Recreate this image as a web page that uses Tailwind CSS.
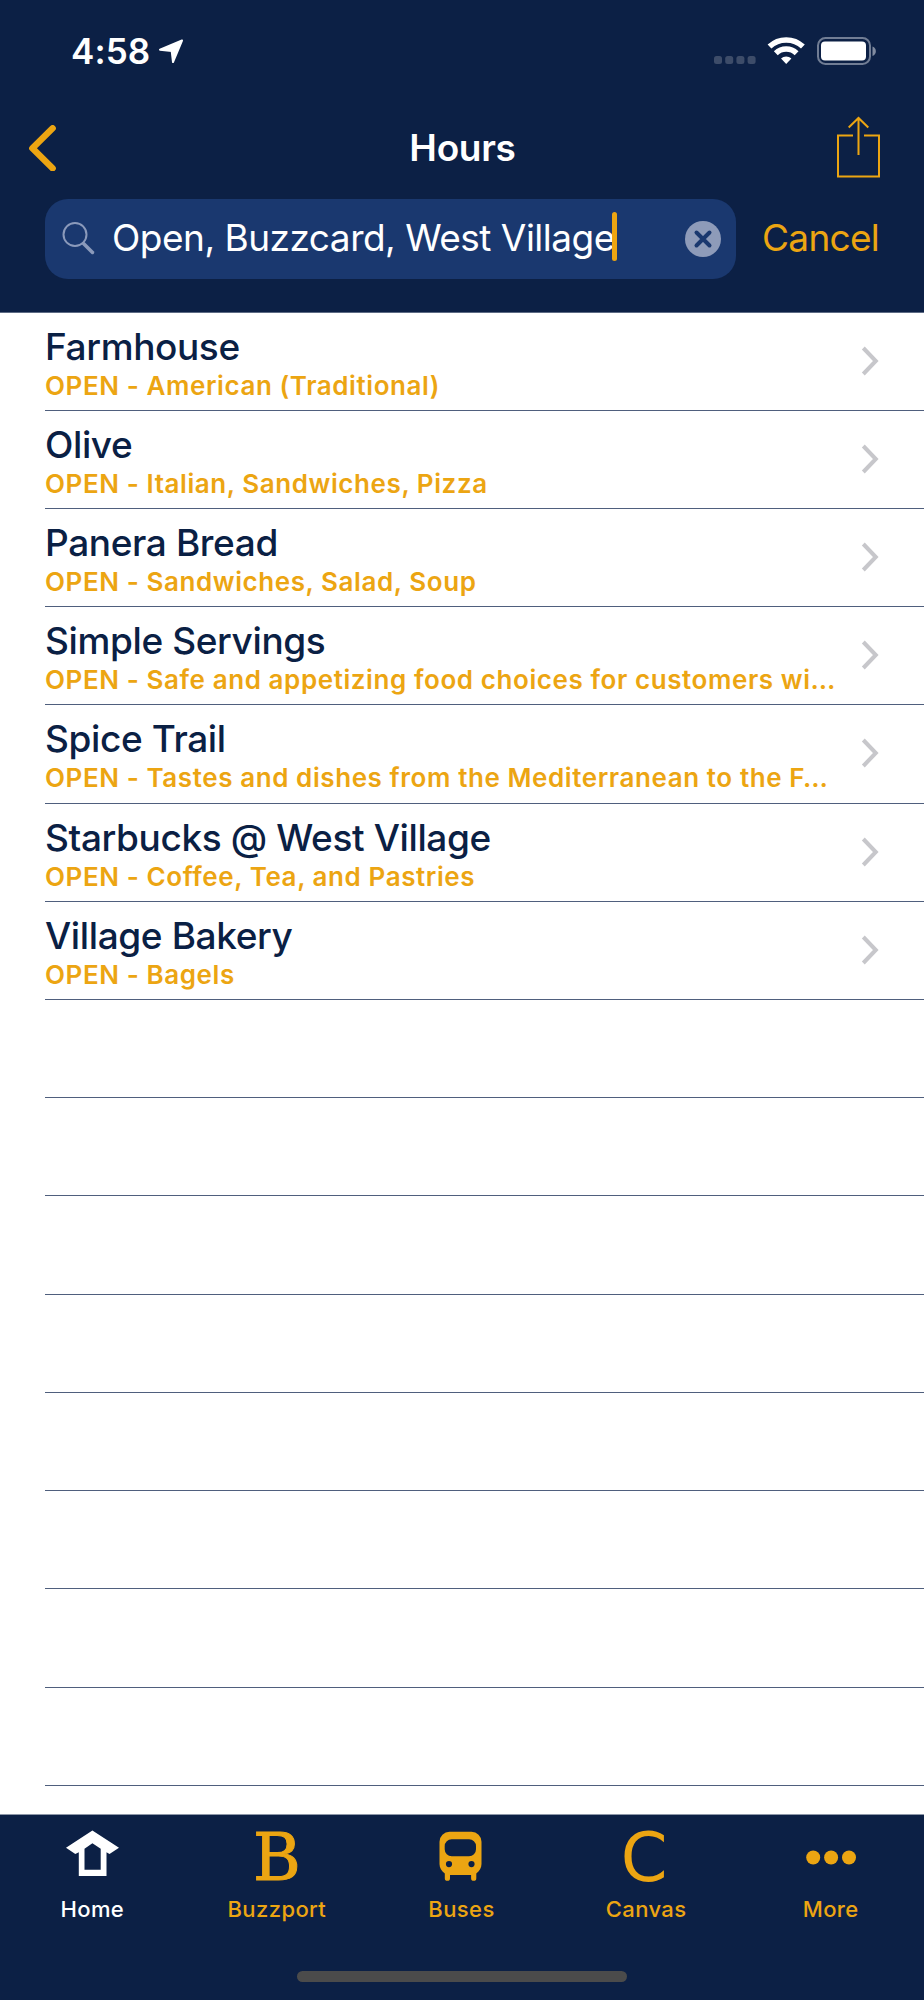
<!DOCTYPE html>
<html lang="en">
<head>
    <meta charset="UTF-8">
    <meta name="viewport" content="width=device-width, initial-scale=1.0">
    <title>Hours</title>
    <script src="https://cdn.jsdelivr.net/npm/@tailwindcss/browser@4"></script>
</head>
<body class="bg-white font-['Inter','Liberation_Sans',sans-serif] w-[924px] h-[2000px] overflow-hidden flex flex-col">
    <!-- Header: status bar, navigation and search -->
    <header class="bg-[#0c2045] h-[313px] border-b border-[#5d6b84] shrink-0">
        <!-- Status bar -->
        <div class="h-[101px] flex items-center justify-between pl-[71px] pr-[47px] text-white">
            <div class="flex items-center">
                <span class="w-[87px] text-[35px] leading-10 font-semibold tracking-[0.1px] whitespace-nowrap">4:58</span>
                <svg class="w-[28px] h-[28px]" viewBox="0 0 28 28" fill="currentColor" stroke="currentColor" stroke-width="2" stroke-linejoin="round"><path d="M24 3.500 2 12.700 13.700 14.100 15 25.100Z"/></svg>
            </div>
            <div class="flex items-center">
                <svg class="w-[42px] h-[28px]" viewBox="0 0 42 28" fill="#3d4c69">
                    <rect x="0" y="19" width="8" height="8" rx="2.5"/>
                    <rect x="11.2" y="19" width="8" height="8" rx="2.5"/>
                    <rect x="22.4" y="19" width="8" height="8" rx="2.5"/>
                    <rect x="33.6" y="19" width="8" height="8" rx="2.5"/>
                </svg>
                <svg class="w-[38px] h-[28px] ml-[11px]" viewBox="0 0 38 28" fill="none" stroke="#fff" stroke-width="5.5">
                    <path d="M2.5 9.600a24.2 24.2 0 0 1 33.4 0"/>
                    <path d="M8.8 16.2a15 15 0 0 1 20.8 0"/>
                    <path d="M14 21.6a7.6 7.6 0 0 1 10.4 0L19.2 27Z" fill="#fff" stroke="none"/>
                </svg>
                <svg class="w-[60px] h-[28px] ml-[12px]" viewBox="0 0 60 28">
                    <rect x="1" y="1" width="52" height="26" rx="7.5" fill="none" stroke="#717d94" stroke-width="2"/>
                    <rect x="4" y="4.5" width="45" height="19" rx="4" fill="#fff"/>
                    <path d="M55.5 9.5c4.5 1.5 4.5 8 0 9.500Z" fill="#818ba0"/>
                </svg>
            </div>
        </div>

        <!-- Navigation bar -->
        <div class="h-[93px] grid grid-cols-3 items-center pl-[27px] pr-[43px]">
            <svg class="w-[30px] h-[46px]" viewBox="0 0 30 46" fill="none" stroke="#eca512" stroke-width="6.500" stroke-linecap="round" stroke-linejoin="round"><path d="M25.600 3.300 5.400 23.300 25.600 43.300"/></svg>
            <h1 class="text-white text-[37px] leading-10 font-semibold text-center ml-[17px] tracking-[-0.3px]">Hours</h1>
            <svg class="w-[46px] h-[64px] justify-self-end -mt-0.5" viewBox="0 0 46 64" fill="none" stroke="#eca512" stroke-width="2">
                <path d="M18 20.500H3v41h41v-41H29M23.500 40V4M13.700 12.500 23.500 3l9.800 9.500"/>
            </svg>
        </div>

        <!-- Search bar -->
        <div class="flex items-center mt-[5px] pl-[45px] h-20">
            <div class="bg-[#1a386f] w-[691px] h-20 rounded-[23px] flex items-center pl-[17px] pr-[15px]">
                <svg class="w-[34px] h-[34px]" viewBox="0 0 34 34" fill="none" stroke="#8b9abb">
                    <circle cx="13" cy="12.500" r="11.500" stroke-width="2"/>
                    <path d="m21.500 21.500 9 9" stroke-width="3.500" stroke-linecap="round"/>
                </svg>
                <span class="ml-4 pb-0.5 text-white text-[37px] leading-10 tracking-[-0.5px] whitespace-nowrap w-[500px]">Open, Buzzcard, West Village</span>
                <span class="w-[5px] h-[49px] rounded-sm bg-[#eca512] -mt-[5px]"></span>
                <svg class="w-9 h-9 ml-auto" viewBox="0 0 36 36">
                    <circle cx="18" cy="18" r="18" fill="#8e9bb9"/>
                    <path d="m11.500 11.500 13 13m0-13-13 13" stroke="#1a386f" stroke-width="4" stroke-linecap="round"/>
                </svg>
            </div>
            <span class="ml-[26px] pb-0.5 text-[#eca512] text-[37px] leading-10 tracking-[-0.7px]">Cancel</span>
        </div>
    </header>

    <!-- Results list: filled and trailing empty rows are built by the script below -->
    <main id="list" class="flex-1 overflow-hidden pl-[45px] -mt-[0.5px]"></main>

    <!-- Tab bar -->
    <footer class="bg-[#0c2045] h-[186px] border-t border-[#8d97a8] shrink-0 text-[#eca512]">
        <nav class="grid grid-cols-5 pt-[11px] pr-px text-[22px] leading-7 font-medium text-center tracking-[0.4px]">
            <a class="flex flex-col items-center text-white">
                <svg class="w-[60px] h-16" viewBox="0 0 60 64" fill="currentColor" fill-rule="evenodd"><path d="M30.400 4.500 57 21.700 47.500 28 44.500 26.300V50H16.800V26.300L13.300 28 4 21.700ZM30.400 17.200 22.500 22.700V43.800H38.700V22.700Z"/></svg>
                <span class="mt-[5px]">Home</span>
            </a>
            <a class="flex flex-col items-center">
                <span class="h-16 leading-16 text-[65px] tracking-normal font-normal font-['DejaVu_Serif',serif] [-webkit-text-stroke:1px_#eca512]">B</span>
                <span class="mt-[5px]">Buzzport</span>
            </a>
            <a class="flex flex-col items-center">
                <svg class="w-[60px] h-16" viewBox="0 0 60 64" fill="currentColor">
                    <path fill-rule="evenodd" d="M18.500 5.700h22a10 10 0 0 1 10 10V38c0 4-2 7-5.200 9.500v4.700a2.600 2.600 0 0 1-5.200 0V49H19v3.200a2.600 2.600 0 0 1-5.200 0v-4.700C10.500 45 8.500 42 8.500 38V15.700a10 10 0 0 1 10-10ZM20.700 13.200a7 7 0 0 0-7 7v3a7 7 0 0 0 7 7H38a7 7 0 0 0 7-7v-3a7 7 0 0 0-7-7ZM18 35a3.100 3.100 0 1 0 0 6.200A3.100 3.100 0 0 0 18 35Zm22.500 0a3.100 3.100 0 1 0 0 6.200 3.100 3.100 0 0 0 0-6.200Z"/>
                </svg>
                <span class="mt-[5px]">Buses</span>
            </a>
            <a class="flex flex-col items-center">
                <span class="h-16 leading-16 pr-1 text-[67px] tracking-normal font-normal font-['DejaVu_Sans',sans-serif]">C</span>
                <span class="mt-[5px]">Canvas</span>
            </a>
            <a class="flex flex-col items-center">
                <svg class="w-[60px] h-16" viewBox="0 0 60 64" fill="currentColor">
                    <circle cx="12.200" cy="31.500" r="7"/>
                    <circle cx="30.100" cy="31.500" r="7"/>
                    <circle cx="48" cy="31.500" r="7"/>
                </svg>
                <span class="mt-[5px]">More</span>
            </a>
        </nav>
        <!-- Home indicator -->
        <div class="w-[330px] h-[11px] mt-[48px] mx-auto rounded-full bg-[#4b4b4b]"></div>
    </footer>

    <script>
        const places = [
            ['Farmhouse', 'American (Traditional)'],
            ['Olive', 'Italian, Sandwiches, Pizza'],
            ['Panera Bread', 'Sandwiches, Salad, Soup'],
            ['Simple Servings', 'Safe and appetizing food choices for customers wi…'],
            ['Spice Trail', 'Tastes and dishes from the Mediterranean to the F…'],
            ['Starbucks @ West Village', 'Coffee, Tea, and Pastries'],
            ['Village Bakery', 'Bagels']
        ];
        const row = 'h-[98.22px] border-b border-[#4f5f7d] flex justify-between pr-[44px]';
        const list = document.getElementById('list');

        places.forEach(([name, info]) => {
            list.innerHTML += `
                <div class="${row}">
                    <div class="pt-[14px] whitespace-nowrap">
                        <h2 class="text-[#0a2044] text-[37px] leading-10 font-[450] tracking-[-0.38px]">${name}</h2>
                        <p class="mt-1 text-[#eca512] text-[26px] leading-[30px] font-[570] tracking-[0.58px]">OPEN - ${info}</p>
                    </div>
                    <svg class="w-5 h-[32px] mt-8 shrink-0" viewBox="0 0 20 32" fill="none" stroke="#c7c7cb" stroke-width="4"><path d="M3.300 3 15.800 16 3.300 29"/></svg>
                </div>`;
        });
        for (let i = 0; i < 8; i++) {
            list.innerHTML += `<div class="${row}"></div>`;
        }
    </script>
</body>
</html>
